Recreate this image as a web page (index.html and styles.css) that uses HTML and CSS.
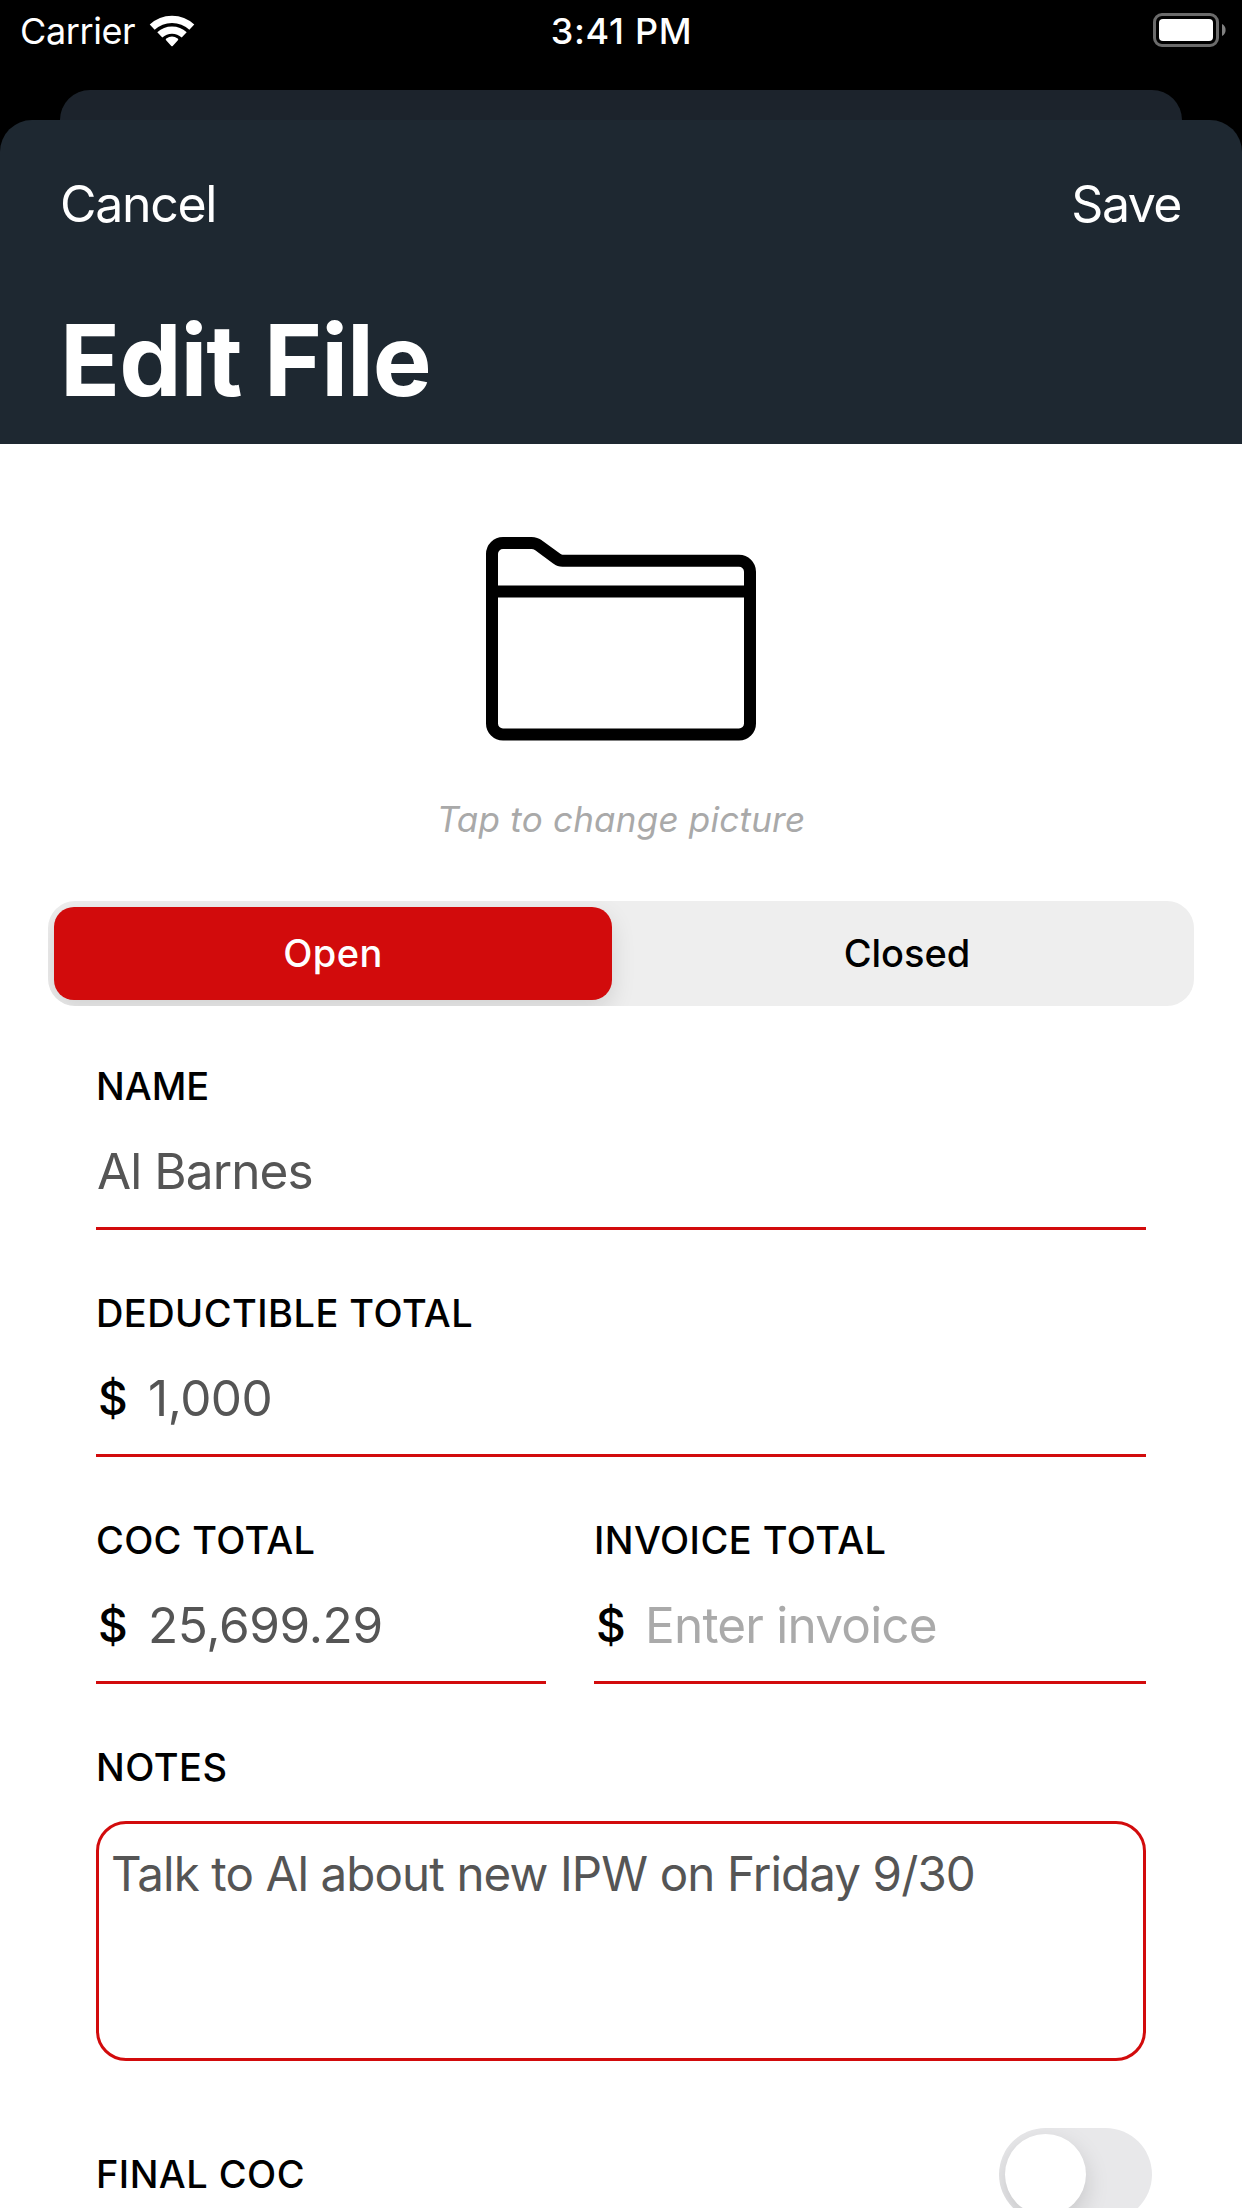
FILE: index.html
```html
<!DOCTYPE html>
<html lang="en">
<head>
  <meta charset="utf-8">
  <title>Edit File</title>
  <link rel="stylesheet" href="styles.css">
</head>
<body>
  <div class="screen">
    <div class="status-bar">
      <div class="status-left">
        <span class="carrier">Carrier</span>
        <svg class="wifi" width="46" height="34" viewBox="0 0 46 34" aria-hidden="true">
          <path class="wifi-arc outer" d="M3.2 13.2A28.9 28.9 0 0 1 42.800 13.2"/>
          <path class="wifi-arc inner" d="M10.8 20.900A18 18 0 0 1 35.2 20.900"/>
          <path class="wifi-dot" d="M17.100 26.200Q16.200 25.300 17.300 24.600A10 10 0 0 1 28.700 24.600Q29.800 25.300 28.900 26.200L23.700 31.900Q23 32.700 22.300 31.900Z"/>
        </svg>
      </div>
      <span class="clock">3:41 PM</span>
      <div class="status-right">
        <svg width="74" height="34" viewBox="0 0 74 34" aria-hidden="true">
          <rect class="battery-case" x="1.5" y="1.5" width="63" height="31" rx="7.5"/>
          <rect class="battery-level" x="6" y="6" width="54" height="22" rx="4"/>
          <path class="battery-tip" d="M69 11A6.800 6.800 0 0 1 69 23Z"/>
        </svg>
      </div>
    </div>

    <div class="back-sheet"></div>

    <main class="sheet">
      <header class="header">
        <nav class="nav">
          <span class="nav-action">Cancel</span>
          <span class="nav-action save">Save</span>
        </nav>
        <h1 class="title">Edit File</h1>
      </header>

      <div class="content">
        <div class="picture">
          <svg class="folder" width="272" height="206" viewBox="0 0 272 206" aria-hidden="true">
            <path d="M7 18A11 11 0 0 1 18 7H46.500Q50.500 7 53.500 9.300L72 22.800Q74.500 24.800 77.500 24.800H254A11 11 0 0 1 265 35.800V187.500A11 11 0 0 1 254 198.500H18A11 11 0 0 1 7 187.500ZM7 55.500H265"/>
          </svg>
          <p class="caption">Tap to change picture</p>
        </div>

        <div class="segmented">
          <div class="segment selected">Open</div>
          <div class="segment closed">Closed</div>
        </div>

        <form class="form">
          <div class="field first">
            <div class="label name-label">NAME</div>
            <div class="value name-value">Al Barnes</div>
          </div>
          <div class="field">
            <div class="label">DEDUCTIBLE TOTAL</div>
            <div class="value"><span class="currency">$</span><span class="amount short">1,000</span></div>
          </div>
          <div class="field-row">
            <div class="field coc">
              <div class="label coc-label">COC TOTAL</div>
              <div class="value"><span class="currency">$</span><span class="amount">25,699.29</span></div>
            </div>
            <div class="field invoice">
              <div class="label">INVOICE TOTAL</div>
              <div class="value"><span class="currency">$</span><span class="placeholder">Enter invoice</span></div>
            </div>
          </div>
          <div class="notes">
            <div class="label notes-label">NOTES</div>
            <div class="notes-box">Talk to Al about new IPW on Friday 9/30</div>
          </div>
          <div class="toggle-row">
            <div class="label">FINAL COC</div>
            <div class="toggle"><div class="knob"></div></div>
          </div>
        </form>
      </div>
    </main>
  </div>
</body>
</html>
```
FILE: styles.css
```css
* {
  box-sizing: border-box;
}

body {
  margin: 0;
  background: #000;
  font-family: Inter, "Liberation Sans", sans-serif;
  color: #000;
}

.screen {
  width: 1242px;
  height: 2208px;
  overflow: hidden;
}

/* Status bar */
.status-bar {
  display: grid;
  grid-template-columns: 1fr auto 1fr;
  height: 90px;
  padding: 0 15px 28px 20px;
  align-items: center;
  color: #fff;
  font-size: 36px;
  line-height: 62px;
}

.status-left {
  display: flex;
  align-items: center;
}

.carrier {
  width: 129px;
  letter-spacing: -0.4px;
}

.wifi {
  margin-top: -1px;
}

.wifi-arc {
  fill: none;
  stroke: #fff;
}

.wifi-arc.outer {
  stroke-width: 7.2;
}

.wifi-arc.inner {
  stroke-width: 7.4;
}

.wifi-dot {
  fill: #fff;
}

.clock {
  font-weight: 500;
  letter-spacing: 0.7px;
  margin-right: 4px;
}

.status-right {
  display: flex;
  justify-content: flex-end;
  margin-top: -2px;
}

.battery-case {
  fill: none;
  stroke: #6b6b6b;
  stroke-width: 3;
}

.battery-level {
  fill: #fff;
}

.battery-tip {
  fill: #808080;
}

/* Stacked sheets */
.back-sheet {
  height: 30px;
  margin: 0 60px;
  border-radius: 30px 30px 0 0;
  background: #1c232c;
}

.header {
  height: 324px;
  padding: 1px 61px 0 60px;
  border-radius: 32px 32px 0 0;
  background: #1e2831;
  color: #fff;
}

.nav {
  display: flex;
  justify-content: space-between;
  font-size: 50px;
  line-height: 167px;
}

.nav-action {
  letter-spacing: -1.3px;
}

.nav-action.save {
  letter-spacing: -1.5px;
}

.title {
  margin: 0;
  font-size: 99px;
  font-weight: 700;
  line-height: 144px;
  letter-spacing: -1px;
}

.content {
  height: 1764px;
  background: #fff;
  overflow: hidden;
}

/* Picture */
.picture {
  display: flex;
  flex-direction: column;
  align-items: center;
  padding-top: 92px;
}

.folder {
  fill: none;
  stroke: #000;
  stroke-width: 12;
}

.caption {
  margin: 52px 0 0;
  font-size: 35px;
  font-style: italic;
  line-height: 50px;
  letter-spacing: 0.22px;
  color: #a9a9a9;
}

/* Open / Closed control */
.segmented {
  display: flex;
  height: 105px;
  margin: 57px 48px 0;
  padding: 6px 0 6px 6px;
  border-radius: 27px;
  background: #eee;
  overflow: hidden;
  font-size: 38px;
  font-weight: 500;
  line-height: 93px;
  text-align: center;
}

.segment.selected {
  width: 558px;
  border-radius: 20px;
  background: #d20b0c;
  box-shadow: 0 9px 24px rgba(0, 0, 0, 0.12);
  color: #fff;
  letter-spacing: 0.4px;
}

.segment.closed {
  flex: 1;
  padding-left: 8px;
}

/* Form */
.form {
  padding: 0 96px;
}

.field {
  flex: none;
  margin-top: 55px;
  border-bottom: 3px solid #d20b0c;
}

.field.first {
  margin-top: 52px;
}

.label {
  font-size: 38px;
  font-weight: 500;
  line-height: 56px;
  letter-spacing: 0.45px;
}

.name-label {
  letter-spacing: 0;
}

.coc-label {
  letter-spacing: 0.3px;
}

.notes-label {
  letter-spacing: 0.5px;
}

.value {
  display: flex;
  height: 113px;
  padding-top: 1px;
  font-size: 49.5px;
  line-height: 113px;
  color: #555;
}

.name-value {
  padding-left: 1px;
  letter-spacing: -0.9px;
}

.currency {
  width: 51px;
  padding-left: 2px;
  font-size: 46px;
  font-weight: 450;
  color: #000;
}

.amount {
  padding-left: 1px;
  letter-spacing: -0.35px;
}

.amount.short {
  letter-spacing: -0.5px;
}

.placeholder {
  letter-spacing: -0.8px;
  color: #aaa;
}

.field-row {
  display: flex;
  gap: 48px;
}

.field.coc {
  width: 450px;
}

.field.invoice {
  flex: 1;
}

.notes {
  margin-top: 55px;
}

.notes-box {
  height: 240px;
  margin-top: 26px;
  padding: 20px 12px;
  border: 3px solid #d20b0c;
  border-radius: 30px;
  font-size: 47.5px;
  line-height: 60px;
  letter-spacing: -0.89px;
  color: #555;
}

.toggle-row {
  display: flex;
  align-items: center;
  justify-content: space-between;
  margin: 67px -6px 0 0;
}

.toggle-row .label {
  line-height: 54px;
  padding-bottom: 2px;
}

.toggle {
  width: 153px;
  height: 93px;
  padding: 6px;
  border-radius: 47px;
  background: #e8e8ea;
  overflow: hidden;
}

.knob {
  width: 81px;
  height: 81px;
  border-radius: 50%;
  background: #fff;
  box-shadow: 0 9px 24px rgba(0, 0, 0, 0.15);
}
```
